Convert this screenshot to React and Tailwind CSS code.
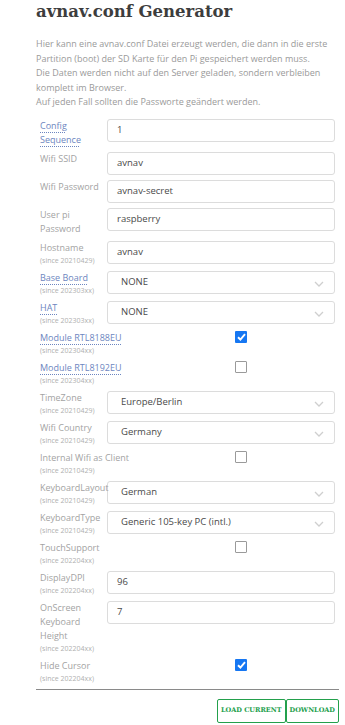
import React from "react";

const rows = [
  { label: "Config Sequence", link: true, type: "input", value: "1" },
  { label: "Wifi SSID", type: "input", value: "avnav" },
  { label: "Wifi Password", type: "input", value: "avnav-secret" },
  { label: "User pi Password", type: "input", value: "raspberry" },
  { label: "Hostname", since: "20210429", type: "input", value: "avnav" },
  { label: "Base Board", link: true, since: "202303xx", type: "select", value: "NONE" },
  { label: "HAT", link: true, since: "202303xx", type: "select", value: "NONE" },
  { label: "Module RTL8188EU", link: true, since: "202304xx", type: "check", checked: true },
  { label: "Module RTL8192EU", link: true, since: "202304xx", type: "check" },
  { label: "TimeZone", since: "20210429", type: "select", value: "Europe/Berlin" },
  { label: "Wifi Country", since: "20210429", type: "select", value: "Germany" },
  { label: "Internal Wifi as Client", since: "20210429", type: "check" },
  { label: "KeyboardLayout", since: "20210429", type: "select", value: "German" },
  { label: "KeyboardType", since: "20210429", type: "select", value: "Generic 105-key PC (intl.)" },
  { label: "TouchSupport", since: "202204xx", type: "check" },
  { label: "DisplayDPI", since: "202204xx", type: "input", value: "96" },
  { label: "OnScreen Keyboard Height", since: "202204xx", type: "input", value: "7" },
  { label: "Hide Cursor", since: "202204xx", type: "check", checked: true },
];

function Label({ row, wide }) {
  return (
    <div className={wide ? "w-[195px] shrink-0" : "relative z-10 w-[67px] shrink-0 pr-[3px]"}>
      <div className="text-[9px] leading-[14px]">
        {row.link ? (
          <span className="text-[#6d86c0] underline decoration-dotted decoration-[#6d86c0] underline-offset-[3px]">
            {row.label}
          </span>
        ) : (
          <span className="text-[#a3a3a3]">{row.label}</span>
        )}
      </div>
      {row.since && (
        <div className="text-[7px] leading-[11px] text-[#b0b0b0] whitespace-nowrap">(since {row.since})</div>
      )}
    </div>
  );
}

function Chevron() {
  return (
    <svg width="10" height="6" viewBox="0 0 10 6" className="absolute right-[10px] top-[9px]">
      <polyline points="1,1 5,5 9,1" fill="none" stroke="#cfcfcf" strokeWidth="1.3" />
    </svg>
  );
}

function Checkbox({ checked }) {
  if (checked) {
    return (
      <div className="w-[12px] h-[12px] rounded-[1px] bg-[#1677f2] flex items-center justify-center">
        <svg width="9" height="8" viewBox="0 0 9 8">
          <polyline points="1,4.2 3.4,6.5 8,1.2" fill="none" stroke="#fff" strokeWidth="1.9" />
        </svg>
      </div>
    );
  }
  return <div className="w-[12px] h-[12px] rounded-[1px] border border-[#9a9a9a] bg-white" />;
}

function Row({ row }) {
  if (row.type === "check") {
    return (
      <div className="flex items-start mb-[5px]">
        <Label row={row} wide />
        <Checkbox checked={row.checked} />
      </div>
    );
  }
  return (
    <div className="flex items-start mb-[5px]">
      <Label row={row} />
      <div className="relative flex-1 h-[23px] border border-[#dcdcdc] rounded-[3px] bg-white flex items-center">
        <span
          className={
            row.type === "select"
              ? "pl-[13px] text-[9.5px] text-[#4a4a4a]"
              : "pl-[9px] text-[9.5px] text-[#4a4a4a]"
          }
        >
          {row.value}
        </span>
        {row.type === "select" && <Chevron />}
      </div>
    </div>
  );
}

export default function App() {
  return (
    <div className="w-[345px] h-[725px] bg-white overflow-hidden pl-[36px] pr-[6px] font-['Open_Sans',sans-serif]">
      <h1 className="pt-[2px] text-[16.5px] leading-[20px] font-bold text-[#3d3d3d] font-['DejaVu_Serif',serif]">
        avnav.conf Generator
      </h1>
      <div className="mt-[15px] text-[9px] leading-[14.5px] text-[#9a9a9a]">
        <p>
          Hier kann eine avnav.conf Datei erzeugt werden, die dann in die erste Partition (boot) der SD Karte für
          den Pi gespeichert werden muss.
        </p>
        <p>Die Daten werden nicht auf den Server geladen, sondern verbleiben komplett im Browser.</p>
        <p>Auf jeden Fall sollten die Passworte geändert werden.</p>
      </div>
      <div className="mt-[9px] pl-[4px] pr-[4px]">
        {rows.map((r) => (
          <Row key={r.label} row={r} />
        ))}
      </div>
      <div className="mt-[3px] border-t border-[#8a8a8a]" />
      <div className="flex justify-end mt-[9px]">
        <button className="h-[24px] px-[3px] border-[1.5px] border-[#23a04c] rounded-[2px] text-[6.5px] font-bold text-[#23a04c] font-['DejaVu_Serif',serif]">
          LOAD CURRENT
        </button>
        <button className="h-[24px] px-[3px] border-[1.5px] border-[#23a04c] rounded-[2px] text-[6.5px] font-bold text-[#23a04c] font-['DejaVu_Serif',serif]">
          DOWNLOAD
        </button>
      </div>
    </div>
  );
}
